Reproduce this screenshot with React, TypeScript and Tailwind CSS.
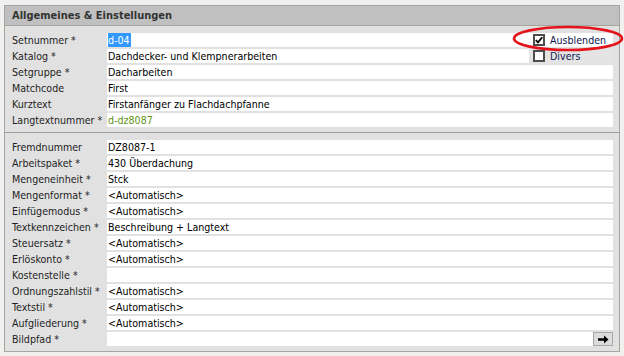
import React from "react";

const font = { fontFamily: '"DejaVu Sans Condensed", "DejaVu Sans", sans-serif' };

function Row({ label, value, green, selected, right }: { label: string; value?: string; green?: boolean; selected?: boolean; right?: React.ReactNode }) {
  return (
    <div className="flex h-[14px] items-stretch">
      <div className="w-[95px] shrink-0 text-[10.6px] leading-[14px] text-[#1e1e1e] whitespace-nowrap">{label}</div>
      <div className="flex flex-1 bg-white text-[10.6px] leading-[14px] text-black">
        <div className="flex-1 pl-[1px] whitespace-nowrap">
          {selected ? (
            <span className="bg-[#3399ff] text-white pr-[1px] inline-block h-[14px]">{value}</span>
          ) : (
            <span className={green ? "text-[#5f9418]" : ""}>{value}</span>
          )}
        </div>
        {right}
      </div>
    </div>
  );
}

function Check({ checked, label }: { checked?: boolean; label: string }) {
  return (
    <div className="flex items-center gap-[5px] pl-[4px]">
      <div className="w-[12px] h-[12px] border-2 border-[#4d4d4d] bg-white flex items-center justify-center">
        {checked && (
          <svg width="8" height="8" viewBox="0 0 8 8">
            <path d="M0.8 4.2 L3 6.4 L7.2 1.2" stroke="#000" strokeWidth="1.8" fill="none" />
          </svg>
        )}
      </div>
      <span className="text-[10.6px] leading-[14px] text-[#101850]">{label}</span>
    </div>
  );
}

export default function App() {
  const s1 = [
    { label: "Setnummer *", value: "d-04", selected: true },
    { label: "Katalog *", value: "Dachdecker- und Klempnerarbeiten" },
    { label: "Setgruppe *", value: "Dacharbeiten" },
    { label: "Matchcode", value: "First" },
    { label: "Kurztext", value: "Firstanfänger zu Flachdachpfanne" },
    { label: "Langtextnummer *", value: "d-dz8087", green: true },
  ];
  const s2 = [
    { label: "Fremdnummer", value: "DZ8087-1" },
    { label: "Arbeitspaket *", value: "430 Überdachung" },
    { label: "Mengeneinheit *", value: "Stck" },
    { label: "Mengenformat *", value: "<Automatisch>" },
    { label: "Einfügemodus *", value: "<Automatisch>" },
    { label: "Textkennzeichen *", value: "Beschreibung + Langtext" },
    { label: "Steuersatz *", value: "<Automatisch>" },
    { label: "Erlöskonto *", value: "<Automatisch>" },
    { label: "Kostenstelle *", value: "" },
    { label: "Ordnungszahlstil *", value: "<Automatisch>" },
    { label: "Textstil *", value: "<Automatisch>" },
    { label: "Aufgliederung *", value: "<Automatisch>" },
  ];
  return (
    <div className="w-[624px] h-[356px] bg-[#f0f0f0] pl-[4px] pt-[5px]" style={font}>
      <div className="relative w-[616px] h-[347px] border border-[#a6a69c] bg-[#e1e1e1] flex flex-col">
        <div className="h-[20px] bg-[#c0c0c0] border-b border-[#a6a69c] pl-[7px] flex items-center">
          <span className="text-[11px] font-bold text-[#333333] leading-none">Allgemeines &amp; Einstellungen</span>
        </div>
        <div className="flex flex-col gap-[2px] pt-[7px] pl-[7px] pr-[6px] pb-[5px]">
          {s1.map((r, i) => (
            <Row
              key={r.label}
              {...r}
              right={
                i === 0 ? (
                  <div className="w-[84px] flex items-center">
                    <Check checked label="Ausblenden" />
                  </div>
                ) : i === 1 ? (
                  <div className="w-[84px] flex items-center bg-[#e4e4e4]">
                    <Check label="Divers" />
                  </div>
                ) : undefined
              }
            />
          ))}
        </div>
        <div className="border-t border-[#a0a0a0] h-px bg-white" />
        <div className="flex flex-col gap-[2px] pt-[7px] pl-[7px] pr-[6px] pb-[4px]">
          {s2.map((r) => (
            <Row key={r.label} {...r} />
          ))}
          <Row
            label="Bildpfad *"
            value=""
            right={
              <div className="w-[20px] h-[14px] bg-[#dcdcdc] border border-[#a8a8a8] flex items-center justify-center">
                <svg width="11" height="9" viewBox="0 0 11 9">
                  <path d="M0 3.2 H6 V0.5 L10.5 4.5 L6 8.5 V5.8 H0 Z" fill="#000" />
                </svg>
              </div>
            }
          />
        </div>
        <svg className="absolute left-[500px] top-[14px] pointer-events-none overflow-visible" width="124" height="38" viewBox="0 0 124 38">
          <ellipse cx="63" cy="18.5" rx="54" ry="11.5" stroke="#e3141c" strokeWidth="2.6" fill="none" />
        </svg>
      </div>
    </div>
  );
}
